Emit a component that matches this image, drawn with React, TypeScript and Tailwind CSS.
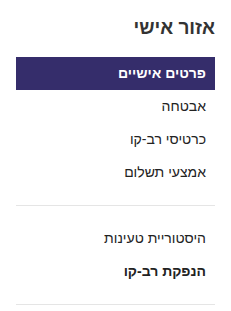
export default function App() {
  const group1 = ["אבטחה", "כרטיסי רב-קו", "אמצעי תשלום"];

  return (
    <div
      dir="rtl"
      className="min-h-screen bg-white px-4 pt-4 text-[#222]"
      style={{ fontFamily: '"Liberation Sans", Arial, sans-serif' }}
    >
      <h2 className="text-[19px] font-bold leading-[24px] text-[#333]">אזור אישי</h2>

      <nav className="mt-[17px]">
        <ul>
          <li className="flex h-[33px] items-center bg-[#352d6b] pr-[9px] text-[14px] font-bold text-white">
            פרטים אישיים
          </li>
          {group1.map((t) => (
            <li key={t} className="flex h-[33px] items-center pr-[9px] text-[14px]">
              {t}
            </li>
          ))}
        </ul>
        <div className="mt-4 border-t border-[#e5e5e5]" />
        <ul className="pt-4">
          <li className="flex h-[33px] items-center pr-[9px] text-[14px]">היסטוריית טעינות</li>
          <li className="flex h-[33px] items-center pr-[9px] text-[14px] font-bold">הנפקת רב-קו</li>
        </ul>
        <div className="mt-4 border-t border-[#e5e5e5]" />
      </nav>
    </div>
  );
}
